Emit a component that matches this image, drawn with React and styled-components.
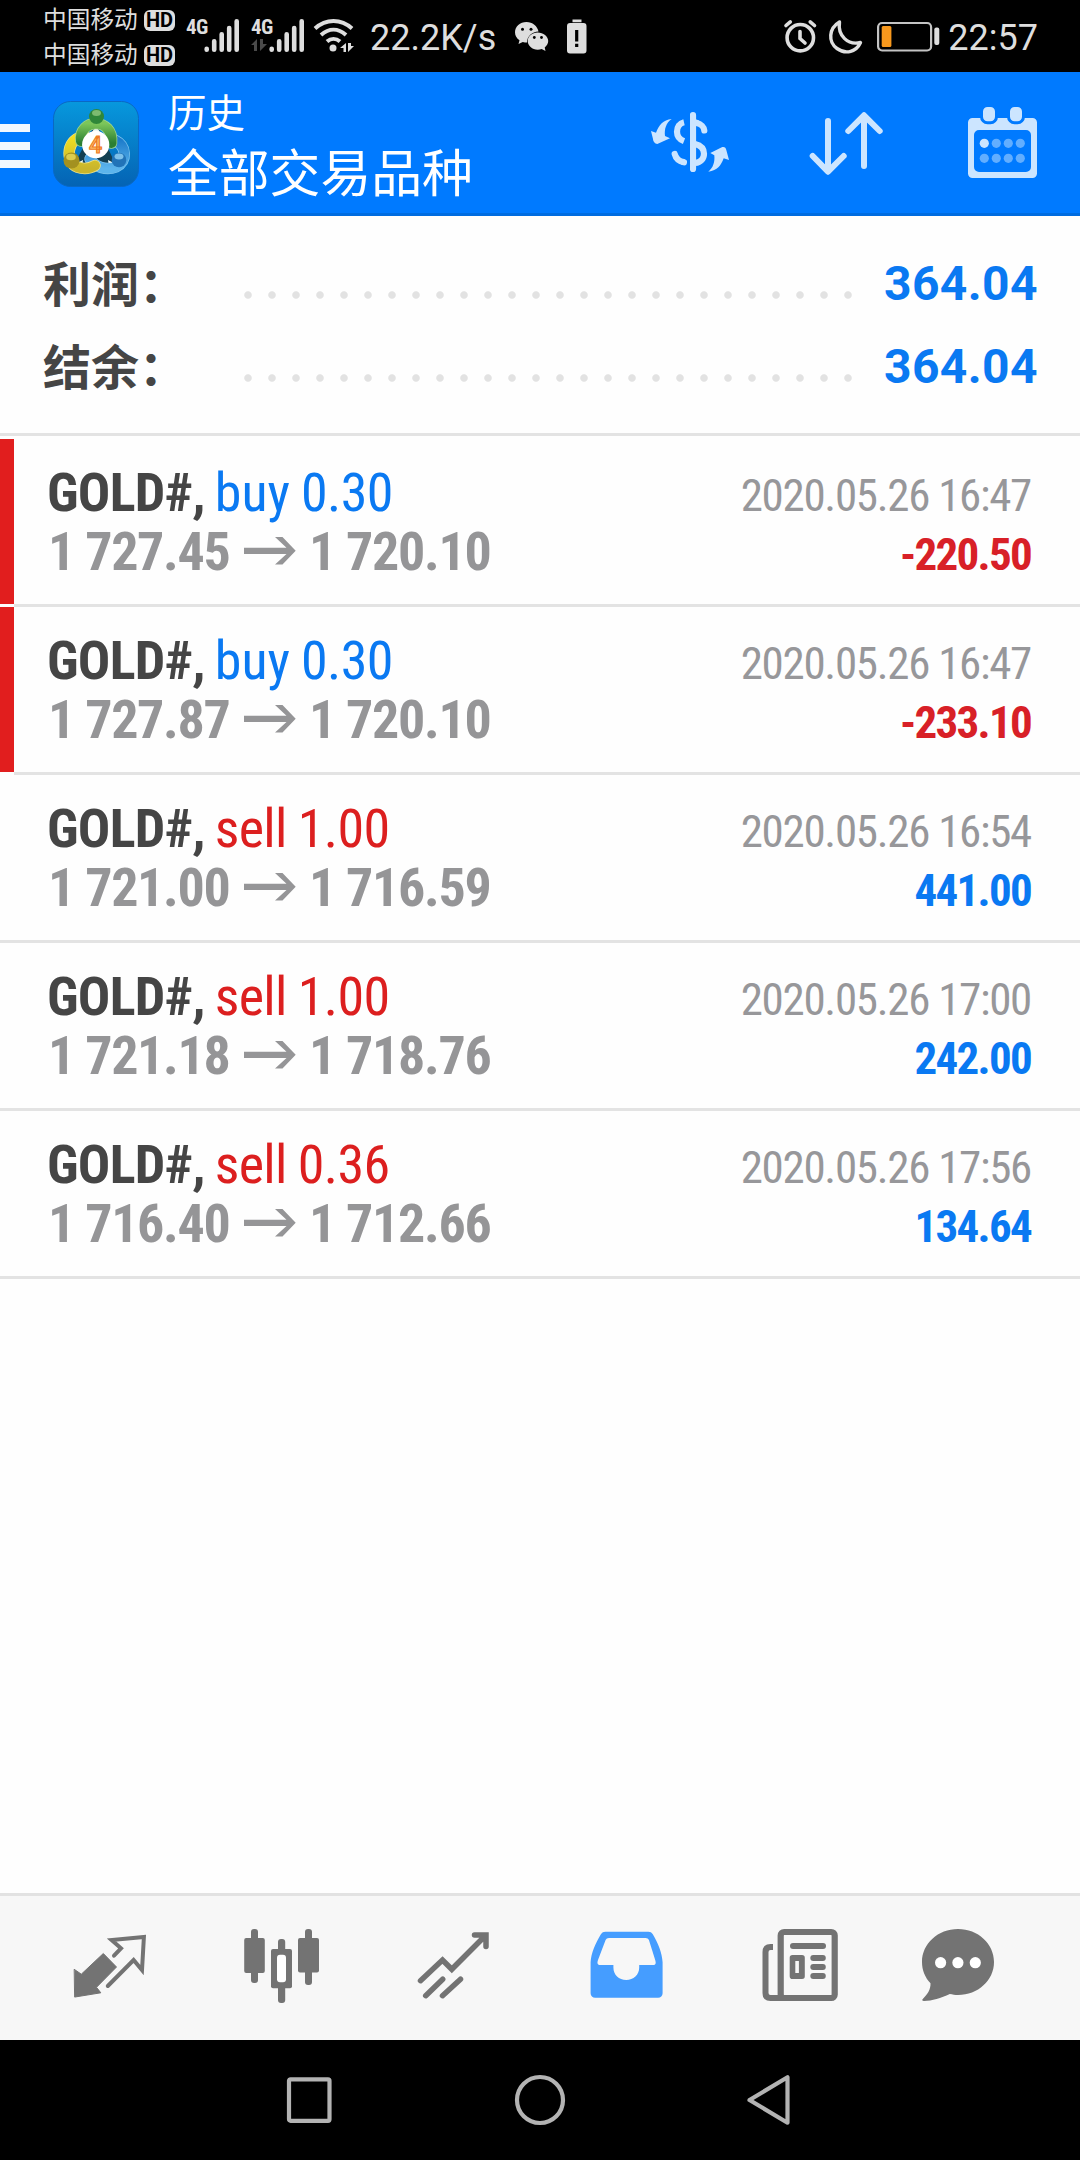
import React from "react";
import styled, { createGlobalStyle } from "styled-components";

const sans = `Roboto, "Noto Sans CJK SC", sans-serif`;
const condensed = `"Roboto Condensed", Roboto, "Noto Sans CJK SC", sans-serif`;

const GlobalStyle = createGlobalStyle`
  * { box-sizing: border-box; }
  body { margin: 0; background: #fff; }
  svg { display: block; flex: none; overflow: visible; }
`;

const Screen = styled.div`
  width: 1080px;
  height: 2160px;
  display: flex;
  flex-direction: column;
  overflow: hidden;
  background: #fefefe;
  font-family: ${sans};
`;

/* ---------- status bar ---------- */

const StatusBar = styled.div`
  height: 72px;
  flex: none;
  display: flex;
  justify-content: space-between;
  padding: 0 42px 0 43px;
  background: #000;
  color: #dedede;
`;

const StatusGroup = styled.div`
  display: flex;
  height: 72px;
  align-items: center;
`;

const Carriers = styled.div`
  width: 132px;
  padding-top: 4px;
`;

const Carrier = styled.div`
  height: 35px;
  display: flex;
  align-items: center;
  justify-content: space-between;
  font-size: 23.7px;
  line-height: 35px;
  white-space: nowrap;
`;

const HdBadge = styled.span`
  width: 31px;
  height: 21px;
  border-radius: 6px;
  background: #dedede;
  color: #000;
  font: 700 20px/21px ${sans};
  text-align: center;
`;

const Signal = styled.div`
  width: 54px;
  height: 72px;
  margin-left: ${(p) => p.$gap}px;
  display: flex;
`;

const Network = styled.div`
  width: 17px;
  padding-top: 15px;
  font: 700 21px/24px ${condensed};
  letter-spacing: -0.5px;
`;

const StatusText = styled.span`
  font-size: 36px;
  line-height: 42px;
  margin-left: ${(p) => p.$gap}px;
  padding-top: 3px;
  white-space: nowrap;
`;

const StatusIcon = styled.svg`
  margin-left: ${(p) => p.$gap}px;
`;

function SignalBars({ gap, data }) {
  return (
    <Signal $gap={gap}>
      <Network>
        4G
        {data && (
          <svg width="16" height="12" viewBox="0 0 16 12" fill="#4a4a4a">
            <path d="M6 0v12H3V6H0zM9 0v12l7-7h-4V0z" />
          </svg>
        )}
      </Network>
      <svg width="37" height="72" viewBox="0 0 37 72" stroke="#dedede" strokeWidth="4.6" strokeLinecap="round">
        <path d="M3.7 48.7v1M11.2 41.3v8.4M18.7 34.3v15.4M26.2 28v21.7M33.7 21.3v28.4" />
      </svg>
    </Signal>
  );
}

/* ---------- header ---------- */

const Header = styled.header`
  height: 144px;
  flex: none;
  display: flex;
  align-items: center;
  padding-right: 36px;
  background: #007aff;
  border-bottom: 3px solid #006ce0;
  color: #fff;
`;

const MenuButton = styled.div`
  width: 30px;
  display: flex;
  flex-direction: column;
  gap: 10px;
  padding-top: 6px;
`;

const MenuBar = styled.span`
  height: 8px;
  background: #f2f8ff;
`;

const Logo = styled.svg`
  margin: 2px 0 0 23px;
`;

const Titles = styled.div`
  flex: 1;
  margin-left: 29px;
  padding-top: 6px;
`;

const Subtitle = styled.div`
  font-size: 38.5px;
  line-height: 58px;
`;

const Title = styled.div`
  font-size: 50.8px;
  line-height: 64px;
`;

const Actions = styled.div`
  display: flex;
  gap: 72px;
  padding-top: 3px;
`;

function AppLogo() {
  const green = "M28 40C25 17 61 16 58.500 42";
  const yellow = "M32 35.500C13 36 12 61 24 66c7 2.500 13 1.500 18-1.500";
  const blue = "M61.500 39C74 45 74.500 60 63 66c-10 4-21 0-26-8";
  return (
    <Logo width="86" height="86" viewBox="0 0 86 86">
      <defs>
        <linearGradient id="tile" x1="0" y1="0" x2="0" y2="1">
          <stop offset="0" stopColor="#0798dd" />
          <stop offset="1" stopColor="#0463b4" />
        </linearGradient>
        <linearGradient id="green" x1="0" y1="0" x2="0" y2="1">
          <stop offset="0" stopColor="#7cc65a" />
          <stop offset="1" stopColor="#2b7f33" />
        </linearGradient>
        <linearGradient id="yellow" x1="0" y1="0" x2="0" y2="1">
          <stop offset="0" stopColor="#f2df22" />
          <stop offset="1" stopColor="#c9b52c" />
        </linearGradient>
        <linearGradient id="blue" x1="0" y1="0" x2="0" y2="1">
          <stop offset="0" stopColor="#1d7ccb" />
          <stop offset="1" stopColor="#5cb4ec" />
        </linearGradient>
      </defs>
      <rect x="0.500" y="0.500" width="85" height="85" rx="17" fill="url(#tile)" stroke="#0a68c4" />
      <path d="M43 22L62 62H22z" fill="#123f52" />
      <path d="M43 25l4 6h-8zM24 62l6-3-1 7zM61 62l-6-3 1 7z" fill="#eef6f4" />
      <g fill="none" strokeLinecap="round">
        <path d={blue} stroke="#7cc3ee" strokeWidth="11.500" />
        <path d={blue} stroke="url(#blue)" strokeWidth="10" />
        <path d={yellow} stroke="#e9e08a" strokeWidth="11.500" />
        <path d={yellow} stroke="url(#yellow)" strokeWidth="10" />
        <path d={green} stroke="#9fd490" strokeWidth="11.500" />
        <path d={green} stroke="url(#green)" strokeWidth="10" />
      </g>
      <circle cx="43.500" cy="15.500" r="7.500" fill="#2f8739" />
      <ellipse cx="43.500" cy="12" rx="4.500" ry="3" fill="#7dbb70" />
      <circle cx="18.500" cy="59.500" r="8" fill="#a39120" />
      <ellipse cx="18" cy="56" rx="4.800" ry="3.200" fill="#dccd4e" />
      <circle cx="66" cy="59" r="7.300" fill="#2173b8" />
      <ellipse cx="66" cy="55.500" rx="4.500" ry="3" fill="#7cc0ea" />
      <circle cx="42.700" cy="43.700" r="13.600" fill="#fff" />
      <text x="42.500" y="51.500" textAnchor="middle" fontFamily="Roboto, sans-serif" fontSize="23" fontWeight="500" fill="#ffc06a" stroke="#ee7a22" strokeWidth="1.200">4</text>
    </Logo>
  );
}

const pale = "#cce5ff";

function CurrencyIcon() {
  return (
    <svg width="84" height="84" viewBox="0 0 84 84">
      <g fill="none" stroke={pale} strokeWidth="6.200">
        <path d="M45 13v54M49 21c4 1 7 4 7.300 7.500M26.700 52c1 4 4.500 7.300 9.300 8.300" strokeLinecap="round" />
        <path d="M36 20.200c-4.500 1-7 5-7 9.600s2.500 7.700 7 9.400M36 60.300l-2-.6M47 42c6 1.500 9 5 9 9.700s-3 8.500-9 9.300M47 20.500l3 .8" />
      </g>
      <path d="M39 12h3v58h-3z" fill="#007aff" />
      <g fill={pale}>
        <path d="M23.700 17C18 21 16.200 27 17 34l5 2.300L9.300 42C7 42 5 39 5 37L3 29l5 1.700C11 23 15 18 23.700 17z" />
        <path d="M60.300 69.700c5-4 6.700-10 6-16.400l-4-2.300 11-5.500c3-1 4.500 0 5 2.500L81 58l-5.300-1.700c-3 7.500-6 12-15.400 13.400z" />
      </g>
    </svg>
  );
}

function SortIcon() {
  return (
    <svg width="84" height="84" viewBox="0 0 84 84" fill="none" stroke={pale} strokeWidth="6" strokeLinecap="round" strokeLinejoin="round">
      <path d="M24 19v50M8.700 54L24 69.700 39.700 54M60 64V14M44.300 29L60 13.300 75.700 29" />
    </svg>
  );
}

function CalendarIcon() {
  const columns = [24.3, 36.3, 48.3, 60.3];
  return (
    <svg width="84" height="84" viewBox="0 0 84 84">
      <path fill={pale} fillRule="evenodd" d="M12.500 16h60a4.500 4.500 0 0 1 4.500 4.500v51a4.500 4.500 0 0 1-4.500 4.500h-60a4.500 4.500 0 0 1-4.500-4.500v-51a4.500 4.500 0 0 1 4.500-4.500zM19 28a5 5 0 0 0-5 5v32a5 5 0 0 0 5 5h47a5 5 0 0 0 5-5V33a5 5 0 0 0-5-5z" />
      <g fill={pale} stroke="#007aff" strokeWidth="3">
        <rect x="21.500" y="3.500" width="15" height="17.200" rx="6" />
        <rect x="48.500" y="3.500" width="15" height="17.200" rx="6" />
      </g>
      {[41.3, 56.3].map((y) =>
        columns.map((x) => (
          <circle key={`${x}-${y}`} cx={x} cy={y} r="4.600" fill={x < 30 && y < 50 ? pale : "#62aeff"} />
        ))
      )}
    </svg>
  );
}

/* ---------- summary ---------- */

const Summary = styled.section`
  height: 220px;
  flex: none;
  padding: 26px 42px 0 43px;
  border-bottom: 3px solid #e3e3e3;
`;

const SummaryRow = styled.div`
  height: 83px;
  display: flex;
  align-items: flex-start;
  font-size: 48px;
  font-weight: 700;
  line-height: 83px;
  color: #454545;
`;

const SummaryLabel = styled.span`
  width: 193px;
  padding-top: 2px;
  white-space: nowrap;
`;

const Leader = styled.span`
  width: 624px;
  height: 8px;
  margin-top: 49px;
  background: radial-gradient(circle at 12px 4px, #e2e2e2 3.3px, transparent 4.2px) 0 0 / 24px 8px repeat-x;
`;

const SummaryValue = styled.span`
  flex: 1;
  text-align: right;
  letter-spacing: 0.4px;
  color: #0a79f2;
`;

/* ---------- deals ---------- */

const Deals = styled.section`
  flex: 1;
  padding-top: 3px;
`;

const LossStripe = styled.div`
  display: flex;
  padding-left: ${(p) => (p.$loss ? 14 : 0)}px;
  ${(p) => p.$loss && "background: linear-gradient(#e11e1e, #e11e1e) 0 0 / 14px 165px no-repeat;"}
`;

const Deal = styled.article`
  flex: 1;
  height: 168px;
  padding: 24px 49px 0 ${(p) => (p.$loss ? 34 : 48)}px;
  border-bottom: 3px solid #e3e3e3;
  font-family: ${condensed};
`;

const DealLine = styled.div`
  height: 59px;
  display: flex;
  align-items: baseline;
  justify-content: space-between;
  font-size: 54px;
  line-height: 59px;
  white-space: nowrap;
`;

const Heading = styled.span`
  display: flex;
  align-items: baseline;
`;

const Symbol = styled.span`
  margin: 0 10px 0 -1px;
  font-weight: 700;
  letter-spacing: -0.75px;
  color: #454545;
`;

const Side = styled.span`
  margin-right: 11px;
  letter-spacing: ${(p) => (p.$side === "buy" ? 0 : -0.7)}px;
  color: ${(p) => (p.$side === "buy" ? "#0a79f2" : "#dc1f1f")};
`;

const Volume = styled(Side)`
  margin-right: 0;
  letter-spacing: -0.6px;
`;

const Prices = styled.span`
  display: flex;
  align-items: baseline;
  font-weight: 700;
  letter-spacing: -1.3px;
  color: #959597;
`;

const PriceArrow = styled.svg`
  margin: -2px 12.500px 0 15px;
  align-self: center;
`;

const DealTime = styled.span`
  font-size: 45px;
  letter-spacing: -1.3px;
  color: #97979a;
`;

const Profit = styled.span`
  font-size: 45px;
  font-weight: 700;
  letter-spacing: -1.7px;
  color: ${(p) => (p.$loss ? "#d82027" : "#0a79f2")};
`;

const deals = [
  { side: "buy", volume: "0.30", from: "1 727.45", to: "1 720.10", time: "2020.05.26 16:47", profit: "-220.50" },
  { side: "buy", volume: "0.30", from: "1 727.87", to: "1 720.10", time: "2020.05.26 16:47", profit: "-233.10" },
  { side: "sell", volume: "1.00", from: "1 721.00", to: "1 716.59", time: "2020.05.26 16:54", profit: "441.00" },
  { side: "sell", volume: "1.00", from: "1 721.18", to: "1 718.76", time: "2020.05.26 17:00", profit: "242.00" },
  { side: "sell", volume: "0.36", from: "1 716.40", to: "1 712.66", time: "2020.05.26 17:56", profit: "134.64" },
];

function DealRow({ deal }) {
  const loss = deal.profit.startsWith("-");
  return (
    <LossStripe $loss={loss}>
      <Deal $loss={loss}>
        <DealLine>
          <Heading>
            <Symbol>GOLD#,</Symbol>
            <Side $side={deal.side}>{deal.side}</Side>
            <Volume $side={deal.side}>{deal.volume}</Volume>
          </Heading>
          <DealTime>{deal.time}</DealTime>
        </DealLine>
        <DealLine>
          <Prices>
            {deal.from}
            <PriceArrow width="52" height="28" viewBox="0 0 52 28" fill="#959597">
              <path d="M31 0h7.500L51.700 13.800 38.500 27.600H31L42.500 17H0v-6.300h42.500z" />
            </PriceArrow>
            {deal.to}
          </Prices>
          <Profit $loss={loss}>{deal.profit}</Profit>
        </DealLine>
      </Deal>
    </LossStripe>
  );
}

/* ---------- bottom tabs ---------- */

const TabBar = styled.nav`
  height: 147px;
  flex: none;
  display: flex;
  padding-left: 24px;
  background: #f7f7f7;
  border-top: 3px solid #e2e2e2;
`;

const Tab = styled.div`
  width: 172px;
  display: flex;
  align-items: center;
  justify-content: center;
  padding-right: ${(p) => p.$inset || 0}px;
  color: ${(p) => (p.$active ? "#459dff" : "#737373")};
`;

const TabIcon = styled.svg.attrs({ width: 84, height: 84, viewBox: "0 0 84 84" })`
  fill: ${(p) => (p.$line ? "none" : "currentColor")};
  stroke: ${(p) => (p.$line ? "currentColor" : "none")};
  stroke-linecap: round;
`;

const SystemNav = styled.nav`
  height: 120px;
  flex: none;
  display: grid;
  grid-template-columns: repeat(3, 231px);
  justify-content: center;
  justify-items: center;
  align-items: center;
  background: #000;
`;

const NavIcon = styled.svg.attrs({ width: 50, height: 50, viewBox: "0 0 50 50" })`
  fill: none;
  stroke: #b3b3b3;
  stroke-width: 4.2;
  stroke-linejoin: round;
`;

export default function App() {
  return (
    <Screen>
      <GlobalStyle />
      <StatusBar>
        <StatusGroup>
          <Carriers>
            <Carrier>中国移动<HdBadge>HD</HdBadge></Carrier>
            <Carrier>中国移动<HdBadge>HD</HdBadge></Carrier>
          </Carriers>
          <SignalBars gap={11} />
          <SignalBars gap={11} data />
          <StatusIcon $gap={9} width="40" height="72" viewBox="0 0 40 72" fill="none" stroke="#dedede" strokeWidth="4">
            <path d="M1 28.500c11-10 26-10 37 0M7 35c8-7 17-7 25 0M13 41.500c4-3.500 9-3.500 13 0" />
            <g fill="#dedede" stroke="none">
              <circle cx="19" cy="48" r="3.500" />
              <path d="M32 43v9h-2.500v-4H26zM34 43v9l6-6h-3v-3z" />
            </g>
          </StatusIcon>
          <StatusText $gap={16}>22.2K/s</StatusText>
          <StatusIcon $gap={19} width="34" height="72" viewBox="0 0 34 72" fill="#dedede">
            <path d="M11.500 22C5 22 0 26.500 0 32.300c0 3.500 1.700 6 4.500 8L3.500 44l4.300-2c1.300.4 3 .6 4.200.6 0-6 5-11 11.500-11C22.300 26 17.500 22 11.500 22z" />
            <path d="M22.700 32.500c-5.500 0-10 3.800-10 8.600s4.500 8.600 10 8.600c1.400 0 2.800-.2 4-.7l3.800 2-.8-3.500c2.200-1.700 3.500-3.900 3.500-6.400 0-4.800-4.900-8.600-10.500-8.600z" />
            <g fill="#000">
              <circle cx="7.500" cy="29.300" r="1.500" />
              <circle cx="16" cy="29.300" r="1.500" />
              <circle cx="19.300" cy="37.500" r="1.400" />
              <circle cx="26.500" cy="37.500" r="1.400" />
            </g>
          </StatusIcon>
          <StatusIcon $gap={18} width="20" height="72" viewBox="0 0 20 72">
            <path fill="#dedede" d="M5.500 19.500h9v2.700h-9zM3 23h13.500a3 3 0 0 1 3 3v24.500a3 3 0 0 1-3 3H3a3 3 0 0 1-3-3V26a3 3 0 0 1 3-3z" />
            <path stroke="#000" strokeWidth="3.200" d="M9.700 30v11.500M9.700 43.800v3.200" />
          </StatusIcon>
        </StatusGroup>
        <StatusGroup>
          <StatusIcon $gap={0} width="33" height="72" viewBox="0 0 33 72" fill="none" stroke="#dedede" strokeWidth="3.600" strokeLinecap="round">
            <circle cx="16.300" cy="37.700" r="13.200" />
            <path d="M16 31.500v7l5 4.500M2 25.500l4.300-3.700M30.500 25.500l-4.300-3.700" />
          </StatusIcon>
          <StatusIcon $gap={12} width="34" height="72" viewBox="0 0 34 72" fill="none" stroke="#dedede" strokeWidth="3.400" strokeLinejoin="round">
            <path d="M10.500 22c-11 6.500-11.500 20-2.500 26.500s19.500 3 23.500-6C19 45.500 8.500 36 10.500 22z" />
          </StatusIcon>
          <StatusIcon $gap={14} width="63" height="72" viewBox="0 0 63 72">
            <rect x="1.100" y="23" width="53" height="27.500" rx="4" fill="none" stroke="#c4c4c4" strokeWidth="2.200" />
            <rect x="4.700" y="26" width="9.700" height="21" rx="1.500" fill="#f7981d" />
            <rect x="57.300" y="27.500" width="5" height="17.500" rx="2" fill="#dedede" />
          </StatusIcon>
          <StatusText $gap={8}>22:57</StatusText>
        </StatusGroup>
      </StatusBar>

      <Header>
        <MenuButton>
          <MenuBar />
          <MenuBar />
          <MenuBar />
        </MenuButton>
        <AppLogo />
        <Titles>
          <Subtitle>历史</Subtitle>
          <Title>全部交易品种</Title>
        </Titles>
        <Actions>
          <CurrencyIcon />
          <SortIcon />
          <CalendarIcon />
        </Actions>
      </Header>

      <Summary>
        {["利润：", "结余："].map((label) => (
          <SummaryRow key={label}>
            <SummaryLabel>{label}</SummaryLabel>
            <Leader />
            <SummaryValue>364.04</SummaryValue>
          </SummaryRow>
        ))}
      </Summary>

      <Deals>
        {deals.map((deal, i) => (
          <DealRow key={i} deal={deal} />
        ))}
      </Deals>

      <TabBar>
        <Tab>
          <TabIcon>
            <path d="M6.500 43.500l6.800 4.700L35.300 27.500 48.500 41 28.500 61.300l4.300 5.500L7 71z" stroke="currentColor" strokeLinejoin="round" />
            <path d="M46 29.700L53 22.300 43.600 14l32.300-3L74 44l-8.400-10L39.800 60" fill="none" stroke="currentColor" strokeWidth="4" />
          </TabIcon>
        </Tab>
        <Tab>
          <TabIcon>
            <rect x="4.200" y="12" width="20.600" height="35" rx="2" />
            <rect x="11" y="3" width="7" height="54" rx="3" />
            <rect x="58" y="12" width="21" height="34.500" rx="2" />
            <rect x="65" y="3" width="7" height="56" rx="3" />
            <rect x="38" y="13" width="7.200" height="64" rx="3" />
            <rect x="31" y="23" width="21" height="39.300" rx="2" />
            <rect x="37" y="28.700" width="9" height="27.600" rx="3" fill="#fff" />
          </TabIcon>
        </Tab>
        <Tab>
          <TabIcon $line strokeWidth="5.500">
            <path d="M8.500 54.700L30.500 34l9.300 9.300L73 10M62.500 9H74v11.500M13.700 69.700l17-16.500M30.500 69.700L48.500 53.200" />
          </TabIcon>
        </Tab>
        <Tab $active>
          <TabIcon>
            <path fillRule="evenodd" d="M21.400 5.700h43c2 0 3.300.8 4.400 2.500 5.500 9 9.300 19 9.800 28v31a4.500 4.500 0 0 1-4.500 4.500h-63a4.500 4.500 0 0 1-4.500-4.500v-31c.5-9 4.800-19 10.300-28 1.100-1.700 2.500-2.500 4.500-2.500zM25 12c-1.700 0-2.700.7-3.500 2.300L14 34c-1.200 3.500-.3 5 2.200 5h13.200v2.500c0 7.500 5.500 12.500 12.800 12.500s13-5 13-12.500V39h14c2.500 0 3-1.500 2-5L65 14.300C64.300 12.700 63.200 12 61.500 12z" />
          </TabIcon>
        </Tab>
        <Tab>
          <TabIcon>
            <rect x="24.700" y="6" width="54" height="66" rx="3.500" fill="none" stroke="currentColor" strokeWidth="6.200" />
            <path d="M17 21h-2.500q-5 0-5 5v41q0 5 5 5H28" fill="none" stroke="currentColor" strokeWidth="6" strokeLinecap="butt" />
            <rect x="34" y="17" width="36" height="6" rx="3" />
            <path fillRule="evenodd" d="M36.500 29H46a2.800 2.800 0 0 1 2.800 2.800V50A2.800 2.800 0 0 1 46 53h-9.500a2.800 2.800 0 0 1-2.800-2.800V31.800A2.800 2.800 0 0 1 36.500 29zM39.300 35v12h3.600V35z" />
            <rect x="54.300" y="29" width="15.500" height="6" rx="3" />
            <rect x="54.300" y="38" width="15.500" height="6" rx="3" />
            <rect x="54.300" y="47" width="15.500" height="6" rx="3" />
          </TabIcon>
        </Tab>
        <Tab $inset={24}>
          <TabIcon>
            <path d="M42 3c20 0 36 14.700 36 33S62 69 42 69c-3 0-5.500-.5-8.200-1C25 72 16 75 8 75c-2 0-2.200-1-1-2.200 4.500-4.300 7.800-9.500 7.500-15.500C9 51.500 6 44 6 36 6 17.700 22 3 42 3z" />
            <g fill="#fff">
              <circle cx="24.600" cy="36.700" r="5.600" />
              <circle cx="41.900" cy="36.700" r="5.600" />
              <circle cx="59.300" cy="36.700" r="5.600" />
            </g>
          </TabIcon>
        </Tab>
      </TabBar>

      <SystemNav>
        <NavIcon><rect x="5" y="4.300" width="40.500" height="41.500" rx="1.500" /></NavIcon>
        <NavIcon><circle cx="25" cy="25" r="23" /></NavIcon>
        <NavIcon><path d="M3.500 25L41.500 2.300V47.700z" /></NavIcon>
      </SystemNav>
    </Screen>
  );
}
